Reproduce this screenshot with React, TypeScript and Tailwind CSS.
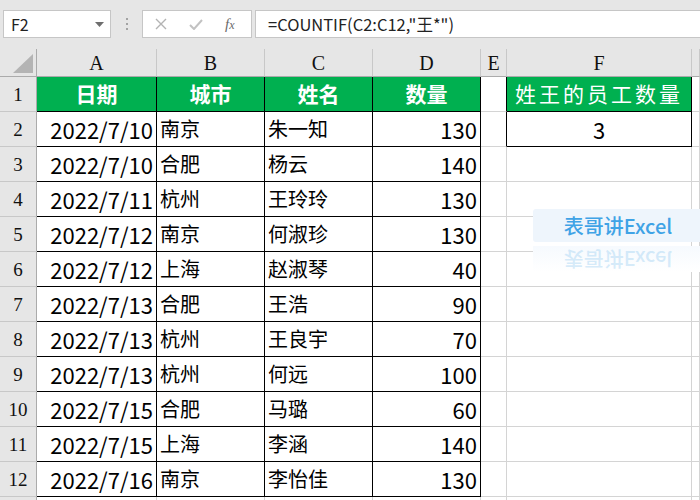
import React from "react";

const data: string[][] = [
  ["2022/7/10", "南京", "朱一知", "130"],
  ["2022/7/10", "合肥", "杨云", "140"],
  ["2022/7/11", "杭州", "王玲玲", "130"],
  ["2022/7/12", "南京", "何淑珍", "130"],
  ["2022/7/12", "上海", "赵淑琴", "40"],
  ["2022/7/13", "合肥", "王浩", "90"],
  ["2022/7/13", "杭州", "王良宇", "70"],
  ["2022/7/13", "杭州", "何远", "100"],
  ["2022/7/15", "合肥", "马璐", "60"],
  ["2022/7/15", "上海", "李涵", "140"],
  ["2022/7/16", "南京", "李怡佳", "130"],
];

const letters = ["A", "B", "C", "D", "E", "F", ""];

// toolbar above the sheet: name box, separator dots, cancel/enter/fx, formula
const FormulaBar = () => (
  <div className="flex h-[49px] items-start gap-0 bg-[#e6e6e6] pt-[10px] pl-[3px]">
    <div className="flex h-[28px] w-[108px] items-center justify-between border border-[#c6c6c6] bg-white pl-[7px] pr-[6px] text-[16px] text-[#222]">
      <span>F2</span>
      <svg width="9" height="5" viewBox="0 0 9 5">
        <path d="M0 0h9L4.5 5z" fill="#6e6e6e" />
      </svg>
    </div>
    <div className="flex h-[28px] w-[31px] flex-col items-center justify-center gap-[3px]">
      <span className="h-[2px] w-[2px] bg-[#a3a3a3]" />
      <span className="h-[2px] w-[2px] bg-[#a3a3a3]" />
      <span className="h-[2px] w-[2px] bg-[#a3a3a3]" />
    </div>
    <div className="flex h-[28px] w-[110px] items-center border border-[#c6c6c6] bg-white">
      <svg className="ml-[12px]" width="12" height="12" viewBox="0 0 12 12">
        <path d="M1 1l10 10M11 1L1 11" stroke="#b3b3b3" strokeWidth="1.4" />
      </svg>
      <svg className="ml-[22px]" width="14" height="11" viewBox="0 0 14 11">
        <path d="M1 6l4 4 8-9" stroke="#c2c2c2" strokeWidth="2" fill="none" />
      </svg>
      <span className="ml-[22px] text-[15px] italic text-[#6a6a6a] [font-family:'Liberation_Serif',serif]">
        f<span className="text-[12px]">x</span>
      </span>
    </div>
    <div className="ml-[3px] flex h-[28px] flex-1 items-center border border-[#c6c6c6] border-r-0 bg-white pl-[12px] text-[16.5px] text-[#222]">
      =COUNTIF(C2:C12,"王*")
    </div>
  </div>
);

function cellClass(r: number, c: number): string {
  // c: 0 = A ... 3 = D, 4 = E, 5 = F, 6 = G
  const inTable = c <= 3 && r <= 12;
  const inF = c === 5 && r <= 2;
  const right = inTable || inF || (c === 4 && r <= 2) ? "border-r-black" : "border-r-[#d4d4d4]";
  const bottom = inTable || inF ? "border-b-black" : "border-b-[#d4d4d4]";
  const fill = (r === 1 && (c <= 3 || c === 5)) ? "bg-[#00b050] text-white" : "bg-white text-black";
  return `flex h-[35px] items-center border-r border-b ${right} ${bottom} ${fill}`;
}

function cellContent(r: number, c: number) {
  if (r === 1) {
    const head = ["日期", "城市", "姓名", "数量"];
    if (c <= 3) return <span className="w-full text-center text-[21px] font-bold">{head[c]}</span>;
    if (c === 5) return <span className="w-full text-center text-[21px] tracking-[3px]">姓王的员工数量</span>;
    return null;
  }
  if (r <= 12 && c <= 3) {
    const v = data[r - 2][c];
    if (c === 0 || c === 3) {
      return <span className="w-full px-[3px] text-right text-[22px]">{v}</span>;
    }
    return <span className="w-full px-[3px] text-left">{v}</span>;
  }
  if (r === 2 && c === 5) return <span className="w-full text-center text-[22px]">3</span>;
  return null;
}

export default function App() {
  const rowNums = Array.from({ length: 13 }, (_, i) => i + 1);
  return (
    <div className="h-[500px] w-[700px] overflow-hidden bg-white [font-family:'Noto_Sans_CJK_SC',sans-serif]">
      <FormulaBar />
      <div className="relative grid grid-cols-[37px_120px_108px_108px_108px_26px_185px_1fr] text-[20px]">
        {/* corner select-all */}
        <div className="relative h-[28px] border-r border-b border-r-[#ababab] border-b-[#ababab] bg-[#e6e6e6]">
          <svg className="absolute right-[3px] bottom-[3px]" width="20" height="19" viewBox="0 0 20 19">
            <path d="M20 0v19H0z" fill="#b4b4b4" />
          </svg>
        </div>
        {letters.map((l, i) => (
          <div
            key={i}
            className="flex h-[28px] items-center justify-center border-r border-b border-r-[#c8c8c8] border-b-[#ababab] bg-[#e6e6e6] text-[20px] text-[#111] [font-family:'Liberation_Serif',serif]"
          >
            {l}
          </div>
        ))}
        {rowNums.map((r) => (
          <React.Fragment key={r}>
            <div className="flex h-[35px] items-end justify-center border-r border-b border-r-[#ababab] border-b-[#c8c8c8] bg-[#e6e6e6] pb-[2px] text-[19px] text-[#111] [font-family:'Liberation_Serif',serif]">
              {r <= 12 ? r : ""}
            </div>
            {[0, 1, 2, 3, 4, 5, 6].map((c) => (
              <div key={c} className={cellClass(r, c)}>
                {cellContent(r, c)}
              </div>
            ))}
          </React.Fragment>
        ))}

        {/* watermark floating over the sheet */}
        <div className="absolute left-[533px] top-[160px] flex w-[170px] flex-col">
          <div className="flex h-[33px] items-center justify-center rounded-[3px] bg-[#eef5fc] text-[20px] font-medium text-[#3fa3e6]">
            表哥讲Excel
          </div>
          <div className="mt-[4px] flex h-[26px] items-start justify-center overflow-hidden bg-gradient-to-b from-[#f6fafe] to-white">
            <span className="-scale-y-100 text-[20px] font-medium leading-[26px] text-[#3fa3e6] opacity-[0.2]">
              表哥讲Excel
            </span>
          </div>
        </div>
      </div>
    </div>
  );
}
